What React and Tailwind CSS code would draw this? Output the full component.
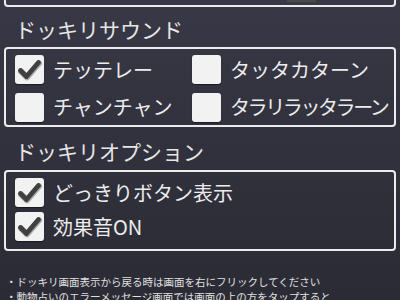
import React from "react";

function Check({ checked }) {
  return (
    <div className="w-[29px] h-[29px] shrink-0 rounded-[3px] bg-[#f2f2f2] shadow-[0_1px_1px_rgba(0,0,0,0.5)] flex items-center justify-center">
      {checked && (
        <svg width="27" height="27" viewBox="0 0 27 27">
          <path d="M4.5 14.5 L10.5 20.5 L22.5 6.5" fill="none" stroke="#2a2a2a" strokeOpacity="0.35" strokeWidth="6" strokeLinecap="round" strokeLinejoin="round" transform="translate(0.5 0.8)" />
          <path d="M4.5 14.5 L10.5 20.5 L22.5 6.5" fill="none" stroke="#404040" strokeWidth="4.8" strokeLinecap="round" strokeLinejoin="round" />
        </svg>
      )}
    </div>
  );
}

function Item({ checked, label, tight }) {
  return (
    <div className="flex items-center gap-[9px] h-[29px]">
      <Check checked={checked} />
      <span
        className={
          "text-[20px] leading-none text-[#ececec] whitespace-nowrap " +
          (tight ? "tracking-[-2.4px]" : "")
        }
      >
        {label}
      </span>
    </div>
  );
}

export default function App() {
  return (
    <div
      className="w-[400px] h-[300px] overflow-hidden bg-gradient-to-b from-[#383846] to-[#2b2b35] flex flex-col"
      style={{ fontFamily: '"Noto Sans CJK JP", "Noto Sans", sans-serif' }}
    >
      <div className="mx-[4px] mt-[-40px] h-[47px] shrink-0 border-2 border-[#ececec] rounded-[4px] flex items-start justify-end pr-[78px] pt-[38px]">
        <div className="w-[29px] h-[2px] bg-[#4a4a46]" />
      </div>
      <div className="pl-[15px] h-[40px] shrink-0 flex items-center text-[21px] text-[#e6e6e6] leading-none pt-[4px]">
        ドッキリサウンド
      </div>
      <div className="mx-[4px] h-[80px] shrink-0 border-2 border-[#ececec] rounded-[4px] pl-[9px] pt-[6px] grid grid-cols-[177px_1fr] gap-y-[5px]">
        <Item checked label="テッテレー" />
        <Item label="タッタカターン" />
        <Item label="チャンチャン" />
        <Item label="タラリラッタラーン" tight />
      </div>
      <div className="pl-[15px] h-[43px] shrink-0 flex items-center text-[21px] text-[#e6e6e6] leading-none pt-[5px]">
        ドッキリオプション
      </div>
      <div className="mx-[4px] h-[81px] shrink-0 border-2 border-[#ececec] rounded-[4px] pl-[9px] pt-[6px] flex flex-col gap-[5px]">
        <Item checked label="どっきりボタン表示" />
        <Item checked label="効果音ON" />
      </div>
      <div className="pl-[6px] pt-[23px] text-[10.5px] leading-[15px] text-[#e0e0e0] whitespace-nowrap">
        <div>・ドッキリ画面表示から戻る時は画面を右にフリックしてください</div>
        <div>・動物占いのエラーメッセージ画面では画面の上の方をタップすると</div>
      </div>
    </div>
  );
}
